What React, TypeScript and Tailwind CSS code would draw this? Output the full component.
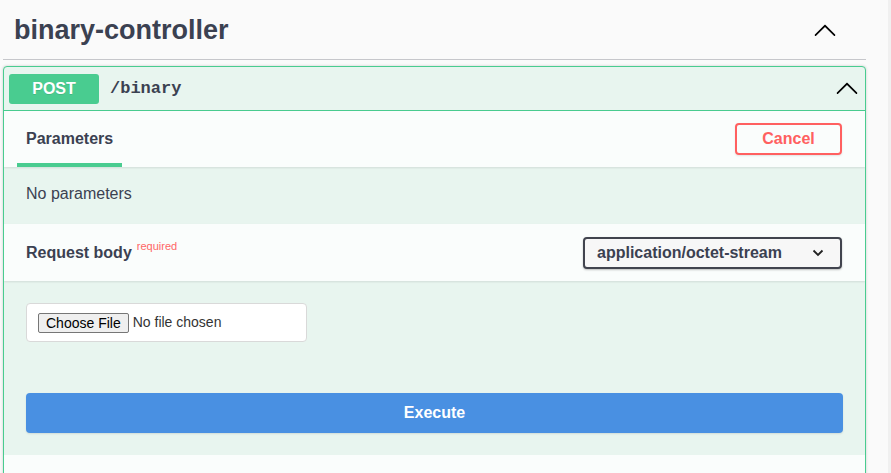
import React from "react";

function Arrow({ className }: { className?: string }) {
  return (
    <svg viewBox="0 0 20 20" className={className} fill="currentColor">
      <path d="M17.418 13.891c.272.268.709.268.979 0s.271-.701 0-.969l-7.908-7.83c-.27-.268-.707-.268-.979 0l-7.908 7.83c-.27.268-.27.701 0 .969.271.268.709.268.979 0L10 6.75l7.418 7.141z" />
    </svg>
  );
}

export default function App() {
  return (
    <div className="flex h-[473px] w-full overflow-hidden bg-[#fafafa] font-['Liberation_Sans',Arial,sans-serif] text-[#3b4151]">
      <div className="w-[866px] shrink-0 pl-[3px]">
        {/* tag header */}
        <div className="flex h-[60px] items-center justify-between border-b border-[#c6c7cb] pl-[11px] pr-[29px] pt-[2px]">
          <h3 className="text-[27px] font-bold leading-none">binary-controller</h3>
          <Arrow className="h-6 w-6 text-black" />
        </div>

        {/* operation block */}
        <div className="mt-[6px] h-[420px] overflow-hidden rounded-[4px] border border-[#49cc90] bg-[#e8f5ef] shadow-[0_0_3px_rgba(0,0,0,0.19)]">
          <div className="flex h-[44px] items-center border-b border-[#49cc90] px-[5px]">
            <span className="flex h-[30px] w-[90px] items-center justify-center rounded-[3px] bg-[#49cc90] text-[16px] font-bold text-white [text-shadow:0_1px_0_rgba(0,0,0,0.1)]">
              POST
            </span>
            <span className="ml-[11px] font-['Liberation_Mono',monospace] text-[17px] font-semibold">
              /binary
            </span>
            <Arrow className="ml-auto mr-[1px] h-6 w-6 text-black" />
          </div>

          {/* tab header */}
          <div className="relative z-10 flex h-[56px] items-center justify-between bg-[#fafdfc] pl-[22px] pr-[23px] shadow-[0_1px_2px_rgba(0,0,0,0.1)]">
            <h4 className="relative text-[16px] font-bold">
              Parameters
              <span className="absolute -bottom-[16px] -left-[9px] -right-[9px] h-[4px] bg-[#49cc90]" />
            </h4>
            <button className="h-[32px] w-[107px] rounded-[4px] border-2 border-[#ff6060] text-[16px] font-bold text-[#ff6060] shadow-[0_1px_2px_rgba(0,0,0,0.1)]">
              Cancel
            </button>
          </div>

          <div className="h-[57px] px-[22px] pt-[15px] text-[16px]">No parameters</div>

          {/* request body header */}
          <div className="relative z-10 flex h-[57px] items-center justify-between bg-[#fafdfc] pl-[22px] pr-[23px] shadow-[0_1px_2px_rgba(0,0,0,0.1)]">
            <div className="text-[16px] font-bold">
              Request body
              <span className="relative -top-[8px] ml-[5px] text-[11px] font-normal text-[#ff6666]">
                required
              </span>
            </div>
            <div className="flex h-[32px] w-[259px] items-center justify-between rounded-[4px] border-2 border-[#41444e] bg-[#f7f7f7] pl-[12px] pr-[16px] shadow-[0_1px_2px_rgba(0,0,0,0.25)]">
              <span className="text-[16px] font-bold">application/octet-stream</span>
              <svg viewBox="0 0 12 8" className="h-[8px] w-[12px]" fill="none" stroke="#222" strokeWidth="1.8">
                <path d="M1.5 1.5 6 6l4.5-4.5" />
              </svg>
            </div>
          </div>

          {/* body */}
          <div className="px-[22px] pb-[22px] pt-[22px]">
            <div className="flex h-[39px] w-[281px] items-center rounded-[4px] border border-[#d9d9d9] bg-white pl-[11px] text-[14px]">
              <span className="rounded-[2px] border border-[#767676] bg-[#efefef] px-[7px] leading-[18px] text-black">
                Choose File
              </span>
              <span className="ml-[4px] text-[#333]">No file chosen</span>
            </div>
            <button className="mt-[51px] h-[40px] w-full rounded-[4px] bg-[#4990e2] text-[16px] font-bold text-white shadow-[0_1px_2px_rgba(0,0,0,0.1)]">
              Execute
            </button>
          </div>

          <div className="h-[40px] bg-[#fafdfc]" />
        </div>
      </div>
      <div className="flex-1" />
      <div className="w-[3px] bg-[#f0f0f0]" />
    </div>
  );
}
